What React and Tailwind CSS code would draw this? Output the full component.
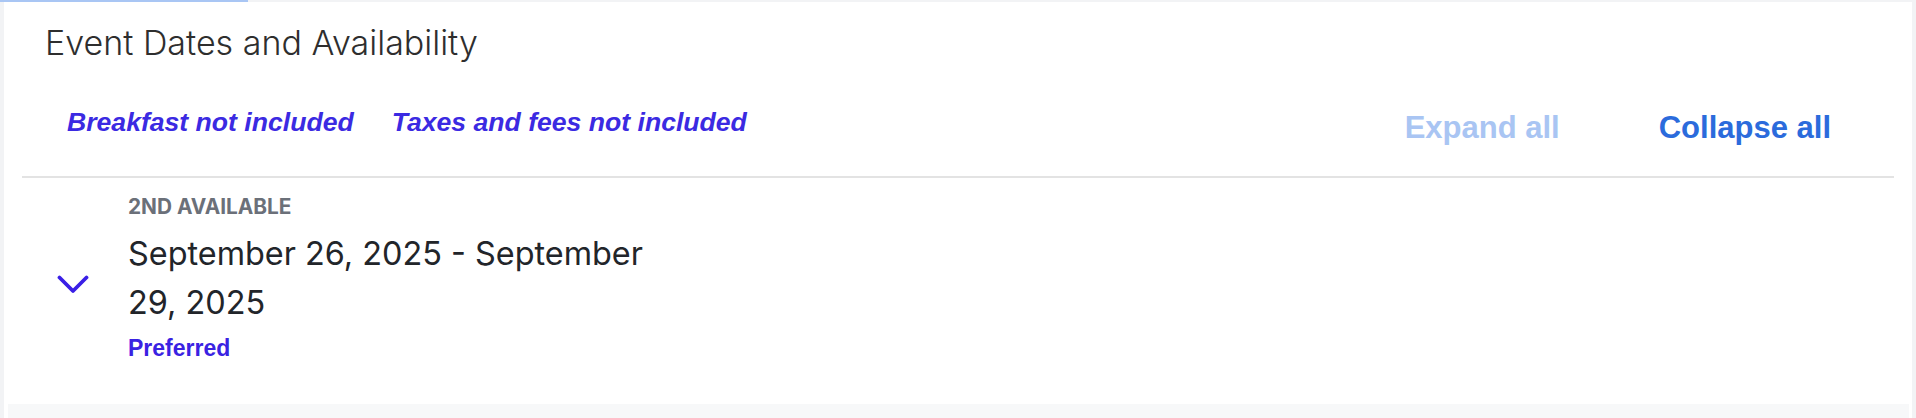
import React from 'react';

const ChevronDown = ({ className = '' }) => (
  <svg viewBox="0 0 32 20" className={className} fill="none">
    <polyline
      points="2.5,2.5 16,16 29.5,2.5"
      stroke="currentColor"
      strokeWidth="3.8"
      strokeLinecap="round"
      strokeLinejoin="round"
    />
  </svg>
);

const DateItem = ({ label, range, tag }) => (
  <div className="flex pl-[53px] pt-[17px]">
    <ChevronDown className="w-[32px] h-[20px] mt-[80px] text-[#3a1fe6] shrink-0" />
    <div className="ml-[39px] w-[540px]">
      <div className="font-['Inter',sans-serif] font-bold text-[20.8px] leading-[24px] text-[#6b7079] uppercase">
        {label}
      </div>
      <div className="mt-[10px] font-['Inter',sans-serif] text-[32.4px] leading-[49px] text-[#22252a]">
        {range}
      </div>
      <div className="mt-[8px] font-['Liberation_Sans',Arial,sans-serif] font-bold text-[23px] leading-[26px] text-[#3a22e2]">
        {tag}
      </div>
    </div>
  </div>
);

export default function App() {
  return (
    <div className="h-[418px] w-full flex flex-col bg-[#f2f3f5] overflow-hidden">
      <div className="h-[2px] w-[248px] bg-[#a9c6f4] shrink-0" />
      <div className="flex-1 flex px-[4px]">
        <div className="flex-1 bg-white flex flex-col">
          <h2 className="pl-[41px] pt-[21px] font-['Inter',sans-serif] font-light text-[34px] leading-[40px] text-[#2e2e2e]">
            Event Dates and Availability
          </h2>

          <div className="flex items-start justify-between pt-[44px] pl-[63px] pr-[81px]">
            <div className="flex gap-[38px] font-['Liberation_Sans',Arial,sans-serif] font-bold italic text-[26.6px] leading-[30px] text-[#3b2ae2]">
              <span>Breakfast not included</span>
              <span>Taxes and fees not included</span>
            </div>
            <div className="mt-[3px] flex gap-[99px] font-['Liberation_Sans',Arial,sans-serif] font-bold text-[31px] leading-[36px]">
              <button className="text-[#a9c5f3]">Expand all</button>
              <button className="text-[#2b6bdc]">Collapse all</button>
            </div>
          </div>

          <div className="mx-[18px] mt-[30px] h-[2px] bg-[#e3e3e3]" />

          <div className="flex-1">
            <DateItem
              label="2nd available"
              range="September 26, 2025 - September 29, 2025"
              tag="Preferred"
            />
          </div>

          <div className="h-[14px] ml-[4px] mr-[3px] bg-[#f7f8f9]" />
        </div>
      </div>
    </div>
  );
}
